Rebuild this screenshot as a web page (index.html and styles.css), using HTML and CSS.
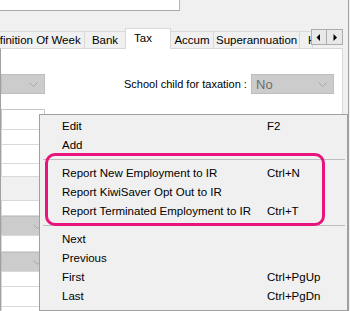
FILE: index.html
```html
<!DOCTYPE html>
<html lang="en">

<head>
    <meta charset="UTF-8">
    <title>Employee - Tax</title>
    <link rel="stylesheet" href="styles.css">
</head>

<body>
    <div class="window">
        <div class="topbar">
            <div class="topfield"></div>
        </div>

        <div class="tabs">
            <div class="tab tab-def">Definition Of Week</div>
            <div class="tab tab-bank">Bank</div>
            <div class="tab tab-tax active">Tax</div>
            <div class="tab tab-accum">Accum</div>
            <div class="tab tab-super">Superannuation</div>
            <div class="tab tab-hol">Holidays</div>
        </div>
        <div class="tab-scroll">
            <div class="scroll-btn">
                <svg width="6" height="7" viewBox="0 0 6 7"><polygon points="4,0 4,7 0.5,3.5" fill="#000" /></svg>
            </div>
            <div class="scroll-btn">
                <svg width="6" height="7" viewBox="0 0 6 7"><polygon points="1.5,0 1.5,7 5,3.5" fill="#000" /></svg>
            </div>
        </div>

        <div class="panel">
            <div class="row">
                <div class="combo combo-left">
                    <svg class="chev" width="9" height="5" viewBox="0 0 9 5"><polyline points="0.5,0.5 4.5,4.5 8.5,0.5" fill="none" stroke="#a8a8a8" /></svg>
                </div>
                <div class="field-label">School child for taxation :</div>
                <div class="combo combo-right">
                    <span class="combo-text">No</span>
                    <svg class="chev" width="9" height="5" viewBox="0 0 9 5"><polyline points="0.5,0.5 4.5,4.5 8.5,0.5" fill="none" stroke="#a8a8a8" /></svg>
                </div>
            </div>

            <div class="fields">
                <div class="box h20"></div>
                <div class="box h15"></div>
                <div class="box h19"></div>
                <div class="box h13"></div>
                <div class="gap"></div>
                <div class="box h15"></div>
                <div class="combo combo-small">
                    <svg class="chev" width="9" height="5" viewBox="0 0 9 5"><polyline points="0.5,0.5 4.5,4.5 8.5,0.5" fill="none" stroke="#a8a8a8" /></svg>
                </div>
                <div class="box h16"></div>
                <div class="combo combo-small">
                    <svg class="chev" width="9" height="5" viewBox="0 0 9 5"><polyline points="0.5,0.5 4.5,4.5 8.5,0.5" fill="none" stroke="#a8a8a8" /></svg>
                </div>
                <div class="box h15"></div>
                <div class="box h20"></div>
                <div class="box h20"></div>
            </div>
        </div>

        <!-- context menu -->
        <div class="menu">
            <div class="item"><span>Edit</span><span>F2</span></div>
            <div class="item"><span>Add</span><span></span></div>
            <div class="sep"></div>
            <div class="group">
                <div class="item"><span>Report New Employment to IR</span><span>Ctrl+N</span></div>
                <div class="item"><span>Report KiwiSaver Opt Out to IR</span><span></span></div>
                <div class="item"><span>Report Terminated Employment to IR</span><span>Ctrl+T</span></div>
            </div>
            <div class="sep"></div>
            <div class="item"><span>Next</span><span></span></div>
            <div class="item"><span>Previous</span><span></span></div>
            <div class="item"><span>First</span><span>Ctrl+PgUp</span></div>
            <div class="item"><span>Last</span><span>Ctrl+PgDn</span></div>
        </div>
    </div>
</body>

</html>
```

FILE: styles.css
```css
* {
    margin: 0px;
    padding: 0px;
    box-sizing: border-box;
}

body {
    width: 350px;
    height: 311px;
    overflow: hidden;
    background: #f0f0f0;
    font-family: "Liberation Sans", Arial, sans-serif;
    font-size: 11.5px;
    color: #000;
}

.window {
    position: relative;
    width: 349px;
    height: 311px;
    border-right: 1px solid #a0a0a0;
    overflow: hidden;
}

.topbar {
    height: 28px;
}

.topfield {
    width: 180px;
    height: 11px;
    background: #fff;
    border-right: 1px solid #b4b4b4;
    border-bottom: 1px solid #a8a8a8;
}

/* tab strip */
.tabs {
    display: flex;
    align-items: flex-end;
    height: 20px;
    white-space: nowrap;
}

.tab {
    position: relative;
    height: 17px;
    line-height: 17px;
    background: #f0f0f0;
    border: 1px solid #d9d9d9;
    border-bottom: none;
    margin-left: -1px;
    padding: 0 2px;
    flex-shrink: 0;
    text-align: center;
}

.tab-def {
    width: 103px;
    margin-left: -18px;
    text-align: right;
    padding-right: 5px;
}

.tab-bank {
    width: 42px;
}

.tab.active {
    width: 46px;
    height: 21px;
    line-height: 19px;
    margin-bottom: -1px;
    background: #fff;
    text-align: left;
    padding-left: 8px;
    z-index: 2;
}

.tab-accum {
    width: 44px;
}

.tab-super {
    width: 87px;
}

.tab-hol {
    width: 14px;
    text-align: left;
    padding-left: 8px;
    overflow: hidden;
}

.tab-scroll {
    position: absolute;
    left: 311px;
    top: 29px;
    display: flex;
    z-index: 3;
}

.scroll-btn {
    width: 16px;
    height: 16px;
    border: 1px solid #adadad;
    background: #e8e8e8;
    display: flex;
    align-items: center;
    justify-content: center;
}

.scroll-btn+.scroll-btn {
    margin-left: -1px;
    width: 17px;
}

/* tab page */
.panel {
    width: 343px;
    height: 263px;
    background: #fff;
    border: 1px solid #d9d9d9;
    border-left-color: #a0a0a0;
    padding: 25px 8px 0 0;
}

.row {
    display: flex;
    align-items: center;
    height: 20px;
}

.combo {
    height: 20px;
    background: #cccccc;
    border: 1px solid #bfbfbf;
    display: flex;
    align-items: center;
    justify-content: flex-end;
    padding-right: 6px;
    flex-shrink: 0;
}

.combo-left {
    width: 44px;
}

.field-label {
    margin-left: 79px;
    white-space: nowrap;
    font-size: 11px;
}

.combo-right {
    width: 83px;
    margin-left: auto;
    justify-content: space-between;
    padding-left: 4px;
}

.combo-text {
    color: #6d6d6d;
    font-size: 13px;
}

.fields {
    width: 44px;
    margin-top: 15px;
}

.box {
    background: #fff;
    border: 1px solid #d9d9d9;
    margin-top: -1px;
}

.fields .box:first-child {
    margin-top: 0;
    border-color: #c8c8c8;
}

.h13 { height: 14px; }
.h15 { height: 16px; }
.h16 { height: 17px; }
.h19 { height: 20px; }
.h20 { height: 21px; }

.gap {
    height: 24px;
    background: #f0f0f0;
}

.combo-small {
    width: 44px;
    padding-right: 2px;
}

/* context menu */
.menu {
    position: absolute;
    left: 39px;
    top: 114px;
    width: 309px;
    height: 197px;
    background: #f0f0f0;
    border: 1px solid #a0a0a0;
    padding: 2px;
    z-index: 5;
}

.item {
    display: grid;
    grid-template-columns: 205px auto;
    height: 19px;
    line-height: 19px;
    padding-left: 20px;
    white-space: nowrap;
}

.sep {
    height: 9px;
    padding-top: 4px;
    margin-left: 1px;
}

.sep::before {
    content: "";
    display: block;
    height: 1px;
    background: #bdbdbd;
}

.group {
    position: relative;
}

.group::before {
    content: "";
    position: absolute;
    left: 3px;
    right: 20px;
    top: -11px;
    bottom: -5px;
    border: 3px solid #e8137c;
    border-radius: 10px;
    z-index: 1;
}
```
